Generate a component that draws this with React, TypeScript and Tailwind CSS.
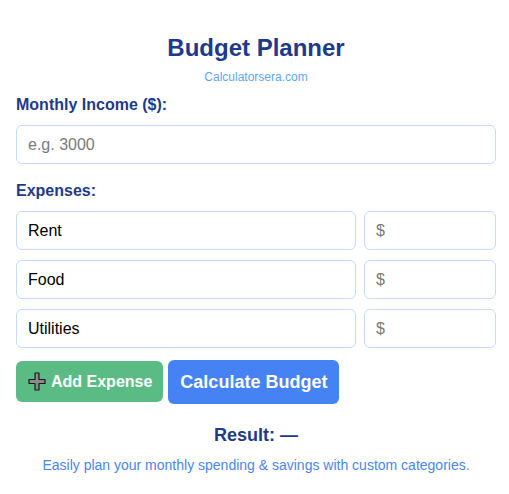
import { useState } from 'react';

type Expense = { id: number; name: string; amount: string };

function PlusIcon() {
  return (
    <svg width="18" height="19" viewBox="0 0 18 19" aria-hidden="true">
      <path d="M7 1h4v6.5h6v4h-6V18H7v-6.5H1v-4h6z" fill="#8a8a8a" stroke="#1a1a1a" strokeWidth="1.2" strokeLinejoin="round" />
    </svg>
  );
}

const inputCls =
  'h-[39px] rounded-md border border-[#c4dbfa] bg-white px-[11px] text-[16px] text-black outline-none placeholder:text-[#7a7a7a]';

export default function App() {
  const [income, setIncome] = useState('');
  const [expenses, setExpenses] = useState<Expense[]>([
    { id: 1, name: 'Rent', amount: '' },
    { id: 2, name: 'Food', amount: '' },
    { id: 3, name: 'Utilities', amount: '' },
  ]);
  const [result, setResult] = useState<string | null>(null);

  function update(id: number, field: 'name' | 'amount', value: string) {
    setExpenses(list => list.map(e => (e.id === id ? { ...e, [field]: value } : e)));
  }

  function addExpense() {
    setExpenses(list => [...list, { id: Date.now(), name: '', amount: '' }]);
  }

  function calculate() {
    const total = expenses.reduce((s, e) => s + (parseFloat(e.amount) || 0), 0);
    const inc = parseFloat(income) || 0;
    setResult(`$${(inc - total).toFixed(2)}`);
  }

  return (
    <div className="min-h-screen bg-white font-['Liberation_Sans',Arial,sans-serif]">
      <div className="ml-4 w-[480px] pt-[34px]">
        <h1 className="text-center text-[24px] font-bold leading-[28px] text-[#1e3a8a]">Budget Planner</h1>
        <p className="mt-[7px] text-center text-[12px] leading-[16px] text-[#60a5fa]">Calculatorsera.com</p>

        <label className="mt-[10px] block text-[16px] font-bold leading-[20px] text-[#1e3a8a]">Monthly Income ($):</label>
        <input
          className={`${inputCls} mt-[10px] w-full`}
          placeholder="e.g. 3000"
          value={income}
          onChange={e => setIncome(e.target.value)}
        />

        <div className="mt-[17px] text-[16px] font-bold leading-[20px] text-[#1e3a8a]">Expenses:</div>
        <div className="mt-[10px] flex flex-col gap-[10px]">
          {expenses.map(e => (
            <div key={e.id} className="flex gap-2">
              <input
                className={`${inputCls} min-w-0 flex-1`}
                value={e.name}
                placeholder="Category"
                onChange={ev => update(e.id, 'name', ev.target.value)}
              />
              <input
                className={`${inputCls} w-[132px]`}
                value={e.amount}
                placeholder="$"
                onChange={ev => update(e.id, 'amount', ev.target.value)}
              />
            </div>
          ))}
        </div>

        <div className="mt-[12px] flex items-start gap-[5px]">
          <button
            onClick={addExpense}
            className="mt-[1px] flex h-[41px] items-center gap-[5px] whitespace-nowrap rounded-md bg-[#5bbb84] pl-3 pr-[11px] text-[16px] font-bold text-white"
          >
            <PlusIcon />
            Add Expense
          </button>
          <button
            onClick={calculate}
            className="h-[44px] whitespace-nowrap rounded-md bg-[#4583f4] px-3 text-[18px] font-bold text-white"
          >
            Calculate Budget
          </button>
        </div>

        <div className="mt-[20px] text-center text-[18px] font-bold leading-[22px] text-[#1e3a8a]">
          Result: {result ?? '—'}
        </div>
        <p className="mt-[10px] text-center text-[14px] leading-[18px] text-[#4a86ef]">
          Easily plan your monthly spending &amp; savings with custom categories.
        </p>
      </div>
    </div>
  );
}
